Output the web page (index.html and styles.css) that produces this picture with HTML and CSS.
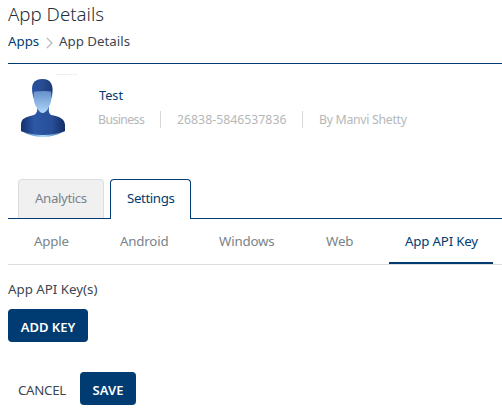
FILE: index.html
```html
<!DOCTYPE html>
<html lang="en">
<head>
<meta charset="utf-8">
<title>App Details</title>
<link rel="stylesheet" href="styles.css">
</head>
<body>
<main class="page">
  <header class="page-header">
    <h1 class="title">App Details</h1>
    <nav class="breadcrumb">
      <a class="crumb-link">Apps</a>
      <svg class="chevron" width="7" height="12" viewBox="0 0 7 12"><path d="M.8.8 6 6 .8 11.2" fill="none" stroke="#b5b5b5" stroke-width="1.2"/></svg>
      <span class="crumb-current">App Details</span>
    </nav>
  </header>
  <section class="summary">
    <svg class="avatar" width="56" height="64" viewBox="0 0 56 64">
      <defs>
        <linearGradient id="face" x1="0" y1="0" x2="0" y2="1"><stop offset="0" stop-color="#6590cb"/><stop offset="1" stop-color="#aed7f8"/></linearGradient>
        <linearGradient id="hair" x1="0" y1="0" x2="1" y2="0"><stop offset="0" stop-color="#2450a0"/><stop offset=".5" stop-color="#294d90"/><stop offset="1" stop-color="#1c397c"/></linearGradient>
        <linearGradient id="body" x1="0" y1="0" x2="1" y2="0"><stop offset="0" stop-color="#15306f"/><stop offset=".3" stop-color="#2c58a4"/><stop offset=".7" stop-color="#284f98"/><stop offset="1" stop-color="#132c64"/></linearGradient>
        <linearGradient id="base" x1="0" y1="0" x2="1" y2="0"><stop offset="0" stop-color="#315c9c"/><stop offset=".5" stop-color="#a9dcff"/><stop offset="1" stop-color="#315c9c"/></linearGradient>
      </defs>
      <path d="M36 .5H57" stroke="#eeeeee" stroke-dasharray="5 1"/>
      <path d="M1 57Q23 69 45 57L44 54H2Z" fill="url(#base)"/>
      <path d="M17 33Q18 39 14 41C6 43 1 44 1 51V57Q23 65 45 57V51C45 45 39 42 31 41Q28 39 29 33Z" fill="url(#body)"/>
      <path d="M13 22C10 10 14 5 22.500 5C31 5 34 11 32 22L30 28H15Z" fill="url(#hair)"/>
      <path d="M14 17.500L25 17 31 17.500C32.500 25 30.500 30 28 35Q22.500 43 17.500 35C14 30 13 25 14 17.500Z" fill="url(#face)"/>
    </svg>
    <div class="summary-text">
      <div class="app-name">Test</div>
      <div class="meta">
        <span class="meta-item business">Business</span>
        <span class="meta-item number">26838-5846537836</span>
        <span class="meta-item author">By Manvi Shetty</span>
      </div>
    </div>
  </section>
  <nav class="tabs">
    <a class="tab analytics">Analytics</a>
    <a class="tab tab-active">Settings</a>
  </nav>
  <nav class="subtabs">
    <a class="subtab apple">Apple</a>
    <a class="subtab android">Android</a>
    <a class="subtab windows">Windows</a>
    <a class="subtab web">Web</a>
    <a class="subtab subtab-active">App API Key</a>
  </nav>
  <section class="keys">
    <div class="keys-label">App API Key(s)</div>
    <button class="button add">ADD KEY</button>
  </section>
  <footer class="actions">
    <button class="cancel">CANCEL</button>
    <button class="button save">SAVE</button>
  </footer>
</main>
</body>
</html>
```
FILE: styles.css
```css
* { box-sizing: border-box; }
body {
  margin: 0;
  background: #fff;
  color: #3c4650;
  font: 13.300px/18px "Noto Sans", "Open Sans", sans-serif;
  overflow: hidden;
}
.page { padding-left: 8px; white-space: nowrap; }
.page-header { height: 64px; border-bottom: 1px solid #003c71; }
.title { margin: 0; padding-top: 1px; font-size: 18.700px; font-weight: 300; line-height: 26px; color: #26303a; }
.breadcrumb { display: flex; align-items: center; height: 18px; margin-top: 5px; }
.crumb-link { width: 38px; color: #003c71; }
.chevron { margin: 3px 6px 0 0; }
.summary { display: flex; height: 115px; }
.avatar { flex: none; margin: 10px 0 0 12px; overflow: visible; }
.summary-text { padding: 22px 0 0 22px; }
.app-name { padding-left: 1px; color: #003c71; font-size: 12.700px; }
.meta { display: flex; margin-top: 7px; color: #b5b8b9; font-size: 12.300px; line-height: 17px; }
.business { width: 63px; border-right: 1px solid #d9d9d9; letter-spacing: -.7px; letter-spacing: -.6px; }
.business { letter-spacing: -.6px; }
.number { width: 142px; padding-left: 16px; border-right: 1px solid #d9d9d9; }
.author { padding-left: 16px; letter-spacing: -.3px; }
.tabs { display: flex; gap: 6px; height: 40px; padding-left: 10px; border-bottom: 1px solid #003c71; }
.tab {
  width: 86px;
  height: 39px;
  padding-left: 16px;
  border: 1px solid #ddd;
  border-bottom: 0;
  border-radius: 4px 4px 0 0;
  background: #f0f0f0;
  color: #78838b;
  letter-spacing: -.4px;
  line-height: 37px;
}
.tab-active { width: 81px; height: 40px; border-color: #003c71; background: #fff; color: #003c71; }
.subtabs { display: flex; height: 46px; border-bottom: 1px solid #ddd; color: #78838b; line-height: 44px; letter-spacing: -.2px; }
.subtab { height: 45px; }
.apple { width: 112px; padding-left: 26px; }
.android { width: 99px; }
.windows { width: 107px; }
.web { width: 63px; }
.subtab-active { width: 104px; padding-left: 16px; border-bottom: 2px solid #003c71; color: #003c71; }
.keys { height: 77px; padding-top: 15px; }
.keys-label { height: 29px; }
button { display: block; margin: 0; padding: 0; border: 0; font: inherit; }
.button { height: 33px; border-radius: 4px; background: #003c71; color: #fff; font-size: 13px; font-weight: 600; line-height: 36px; }
.add { width: 80px; }
.actions { display: flex; padding-top: 30px; }
.cancel { width: 72px; padding-left: 10px; background: none; color: #3c4650; text-align: left; line-height: 36px; letter-spacing: -.3px; }
.save { width: 56px; }
```
